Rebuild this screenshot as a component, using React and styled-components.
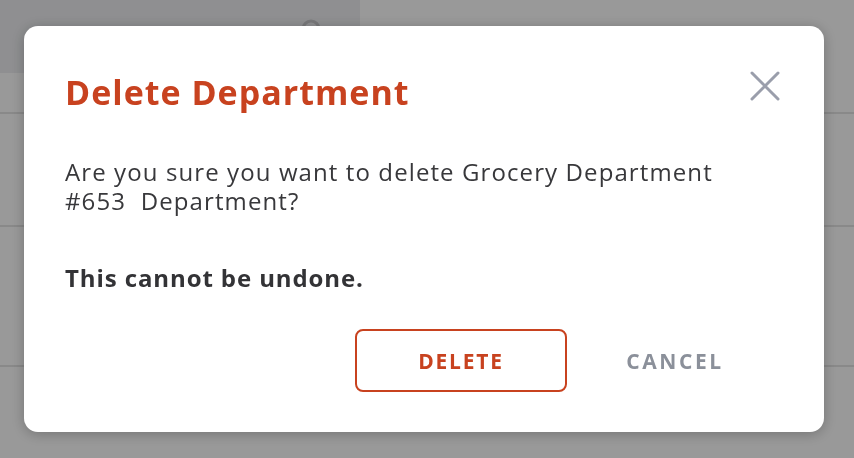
import styled, { createGlobalStyle } from "styled-components";

const GlobalStyle = createGlobalStyle`
    html, body {
        margin: 0;
        padding: 0;
        width: 854px;
        height: 458px;
        overflow: hidden;
        background-color: #FFFFFF;
        font-family: 'Open Sans', 'Liberation Sans', sans-serif;
    }
`

export default function App() {
    return (
        <>
            <GlobalStyle />
            <Page>
                <TopBar>
                    <SearchPanel>
                        <SearchIcon width="24" height="24" viewBox="0 0 24 24">
                            <circle cx="12" cy="12" r="8" fill="none" stroke="#c9cacd" strokeWidth="3" />
                        </SearchIcon>
                    </SearchPanel>
                </TopBar>
                <Row height={41} />
                <Row height={113} />
                <Row height={140} />
            </Page>

            <Overlay>
                <Modal>
                    <Header>
                        <Title>Delete Department</Title>
                        <Close aria-label="close">
                            <svg width="30" height="30" viewBox="0 0 30 30">
                                <path d="M2 2 L28 28 M28 2 L2 28" stroke="#9a9eab" strokeWidth="3" strokeLinecap="round" />
                            </svg>
                        </Close>
                    </Header>
                    <Message>Are you sure you want to delete Grocery Department #653&nbsp; Department?</Message>
                    <Warning>This cannot be undone.</Warning>
                    <Actions>
                        <DeleteButton>DELETE</DeleteButton>
                        <CancelButton>CANCEL</CancelButton>
                    </Actions>
                </Modal>
            </Overlay>
        </>
    )
}

const Page = styled.div`
    width: 854px;
    height: 458px;
    display: flex;
    flex-direction: column;
`

const TopBar = styled.div`
    height: 73px;
    display: flex;
`

const SearchPanel = styled.div`
    width: 360px;
    height: 73px;
    background-color: #eeeff2;
    display: flex;
    justify-content: flex-end;
    padding: 17px 37px 0 0;
    box-sizing: border-box;
`

const SearchIcon = styled.svg`
    display: block;
`

const Row = styled.div`
    height: ${p => p.height}px;
    border-bottom: 2px solid #e4e4e4;
    box-sizing: border-box;
`

const Overlay = styled.div`
    position: fixed;
    inset: 0;
    background-color: rgba(0, 0, 0, 0.4);
    display: flex;
    align-items: flex-start;
    padding: 26px 30px 0 24px;
    box-sizing: border-box;
`

const Modal = styled.div`
    width: 800px;
    height: 406px;
    background-color: #FFFFFF;
    border-radius: 14px;
    box-shadow: 0 2px 14px rgba(0, 0, 0, 0.25);
    padding: 42px 44px 0 41px;
    box-sizing: border-box;
    display: flex;
    flex-direction: column;
`

const Header = styled.div`
    display: flex;
    align-items: flex-start;
    justify-content: space-between;
`

const Title = styled.h2`
    margin: 0;
    font-size: 34px;
    font-weight: 700;
    letter-spacing: 1px;
    color: #c8421f;
    line-height: 48px;
`

const Close = styled.button`
    background: none;
    border: none;
    padding: 0;
    margin-top: 3px;
    cursor: pointer;
    svg {
        display: block;
    }
`

const Message = styled.p`
    margin: 41px 0 0 0;
    width: 660px;
    font-size: 24px;
    letter-spacing: 1.1px;
    line-height: 29px;
    color: #38383b;
`

const Warning = styled.p`
    margin: 48px 0 0 0;
    font-size: 24px;
    font-weight: 700;
    letter-spacing: 0.9px;
    line-height: 29px;
    color: #333336;
`

const Actions = styled.div`
    display: flex;
    justify-content: flex-end;
    align-items: center;
    margin-top: 37px;
    margin-right: 25px;
`

const DeleteButton = styled.button`
    width: 212px;
    height: 63px;
    border: 2px solid #c8421f;
    border-radius: 8px;
    background-color: transparent;
    color: #c8421f;
    font-family: 'Open Sans', 'Liberation Sans', sans-serif;
    font-size: 21px;
    font-weight: 700;
    letter-spacing: 1.8px;
    cursor: pointer;
`

const CancelButton = styled.button`
    width: 160px;
    height: 63px;
    margin-left: 28px;
    border: none;
    background: none;
    color: #8b909a;
    font-family: 'Open Sans', 'Liberation Sans', sans-serif;
    font-size: 21px;
    font-weight: 700;
    letter-spacing: 2.6px;
    cursor: pointer;
`
